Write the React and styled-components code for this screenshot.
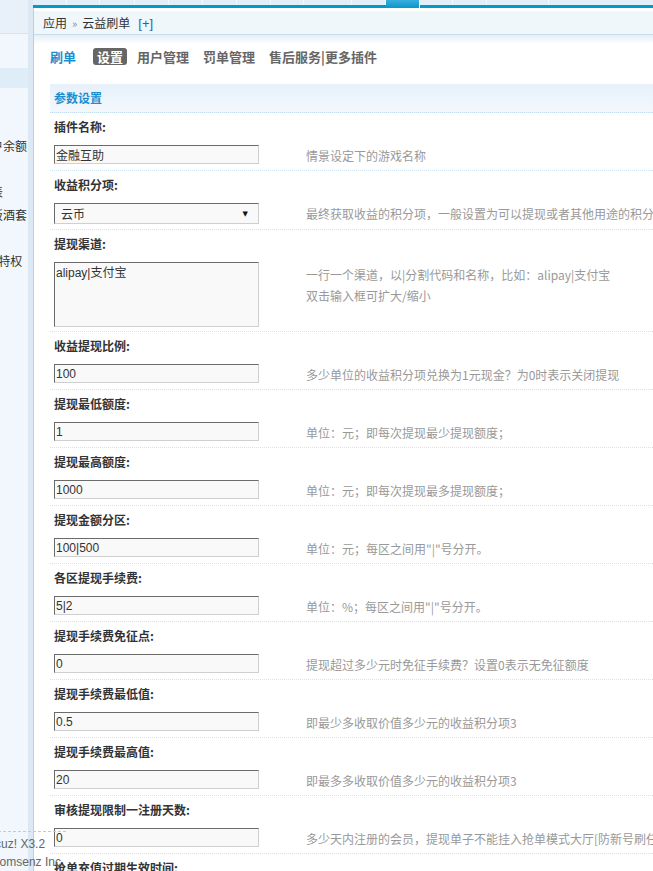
import styled, { createGlobalStyle } from 'styled-components';

const GlobalStyle = createGlobalStyle`
	html, body {
		margin: 0;
		padding: 0;
		overflow: hidden;
		background: #fff;
	}
	body {
		font: 12px "Liberation Sans", "Noto Sans CJK SC", sans-serif;
		color: #333;
	}
`

const navTabs = [34, 33, 35, 34, 34, 34, 34, 33, 48, 34, 34, 33, 34, 62, 120];
const activeTab = 10;

const menu = [
	{ text: '云益刷单插件', active: true },
	{ text: '用户列表' },
	{ text: '订单列表' },
	{ text: '云益刷单用户账户余额：' },
	{ text: '提现记录' },
	{ text: '充值卡密管理列表' },
	{ text: '会员每日限时特饭酒套' },
	{ text: '积分商城' },
	{ text: '开通VIP会员尊享特权' },
	{ text: '系统公告' },
];

const fields = [
	{ label: '插件名称:', value: '金融互助', tip: ['情景设定下的游戏名称'] },
	{ label: '收益积分项:', kind: 'select', value: '云币', tip: ['最终获取收益的积分项，一般设置为可以提现或者其他用途的积分项'] },
	{ label: '提现渠道:', kind: 'textarea', value: 'alipay|支付宝', tip: ['一行一个渠道，以|分割代码和名称，比如：alipay|支付宝', '双击输入框可扩大/缩小'] },
	{ label: '收益提现比例:', value: '100', tip: ['多少单位的收益积分项兑换为1元现金？为0时表示关闭提现'] },
	{ label: '提现最低额度:', value: '1', tip: ['单位：元；即每次提现最少提现额度；'] },
	{ label: '提现最高额度:', value: '1000', tip: ['单位：元；即每次提现最多提现额度；'] },
	{ label: '提现金额分区:', value: '100|500', tip: ['单位：元；每区之间用"|"号分开。'] },
	{ label: '各区提现手续费:', value: '5|2', tip: ['单位：%；每区之间用"|"号分开。'] },
	{ label: '提现手续费免征点:', value: '0', tip: ['提现超过多少元时免征手续费？设置0表示无免征额度'] },
	{ label: '提现手续费最低值:', value: '0.5', tip: ['即最少多收取价值多少元的收益积分项3'] },
	{ label: '提现手续费最高值:', value: '20', tip: ['即最多多收取价值多少元的收益积分项3'] },
	{ label: '审核提现限制一注册天数:', value: '0', tip: ['多少天内注册的会员，提现单子不能挂入抢单模式大厅[防新号刷任务]'] },
	{ label: '抢单充值过期生效时间:', value: '24', tip: ['单位：小时'] },
];

const Shell = styled.div`
	position: relative;
	display: flex;
	height: 100vh;
	overflow: hidden;
`
const Sidebar = styled.aside`
	flex: 0 0 28px;
	background: #f1f7fc;
	border-right: 5px solid #dce9f5;
	overflow: hidden;
`
const SideHead = styled.div`
	height: 33px;
	background: #e8f1fa;
	border-bottom: 1px solid #d5e4f1;
`
const MenuScroll = styled.ul`
	list-style: none;
	margin: 0 0 0 -93px;
	padding: 34px 0 0;
	width: 121px;
`
const MenuItem = styled.li`
	height: 20px;
	line-height: 20px;
	margin-bottom: 3px;
	white-space: nowrap;
	font-family: "Liberation Sans", "Noto Sans CJK SC", sans-serif;
	color: #333;
	background: ${p => p.$active ? '#dfedf9' : 'transparent'};
`
const MainCol = styled.div`
	flex: 1;
	display: flex;
	flex-direction: column;
	min-width: 0;
`
const TopNav = styled.nav`
	display: flex;
	height: 5px;
	background: #e2eef8;
	border-bottom: 3px solid #0099cc;
`
const NavTab = styled.span`
	flex: 0 0 ${p => p.$w}px;
	box-sizing: border-box;
	border-right: 1px solid #f4f9fd;
	background: ${p => p.$active ? 'linear-gradient(#3aaede, #0a96cb)' : 'transparent'};
	height: ${p => p.$active ? '8px' : '5px'};
`
const Frame = styled.main`
	flex: 1;
	border-left: 1px solid #bccfe1;
	padding-top: 3px;
`
const Crumbs = styled.div`
	height: 23px;
	line-height: 23px;
	padding-left: 9px;
	background: #eff7fb;
	border-bottom: 1px solid #c8dbea;
	font-family: "Noto Sans CJK SC", sans-serif;
	color: #333;
	white-space: nowrap;
	span {
		margin: 0 5px;
		color: #7a8ea8;
		font-size: 11px;
	}
	a {
		margin-left: 8px;
		color: #2b62b0;
		text-decoration: none;
		font-family: "Liberation Sans", sans-serif;
		font-size: 13px;
	}
`
const Content = styled.div`
	padding: 13px 0 0 16px;
	background: linear-gradient(to bottom, #e4eef7, #ffffff 9px) no-repeat;
`
const Tabs = styled.div`
	display: flex;
	align-items: center;
	height: 17px;
	margin-bottom: 19px;
	font: bold 13px "Noto Sans CJK SC", sans-serif;
	white-space: nowrap;
`
const TabTitle = styled.h3`
	margin: 0 17px 0 0;
	font-size: 13px;
	color: #1a8fd0;
`
const Tab = styled.span`
	line-height: 17px;
	padding: 0 4px;
	margin-right: 6px;
	border-radius: 3px;
	color: ${p => p.$current ? '#fff' : '#666'};
	background: ${p => p.$current ? '#666' : 'transparent'};
`
const SectionHead = styled.h4`
	margin: 0;
	height: 28px;
	padding-left: 4px;
	background: linear-gradient(#e7f1fa, #f3f8fd);
	border-bottom: 1px dotted #c3dcee;
	font: bold 12px/28px "Noto Sans CJK SC", sans-serif;
	color: #1a8fd0;
`
const Row = styled.section`
	padding-left: 4px;
	border-bottom: 1px dotted #cfe3f1;
`
const Label = styled.div`
	height: 29px;
	box-sizing: border-box;
	padding-top: 5px;
	font: bold 12px/18px "Noto Sans CJK SC", sans-serif;
	color: #333;
	white-space: nowrap;
`
const pad = { input: 6, select: 5, textarea: 4 };
const FieldRow = styled.div`
	display: grid;
	grid-template-columns: 252px 1fr;
	align-items: start;
	padding: 3px 0 ${p => pad[p.$kind]}px;
`
const fieldBox = `
	box-sizing: border-box;
	width: 205px;
	margin: 0;
	border: 1px solid;
	border-color: #6b6b6b #cfcfcf #cfcfcf #6b6b6b;
	background: #f9f9f9;
	color: #333;
	font: 12px "Liberation Sans", "Noto Sans CJK SC", sans-serif;
	outline: none;
`
const TextInput = styled.input`
	${fieldBox}
	height: 19px;
	padding: 0 1px;
`
const SelectBox = styled.div`
	${fieldBox}
	height: 21px;
	display: flex;
	align-items: center;
	justify-content: space-between;
	padding: 0 10px 0 6px;
	b {
		font: 7px "DejaVu Sans", sans-serif;
		color: #111;
	}
`
const TextArea = styled.textarea`
	${fieldBox}
	display: block;
	height: 65px;
	padding: 2px 1px;
	line-height: 16px;
	resize: none;
`
const Tip = styled.div`
	padding-top: 2px;
	line-height: ${p => p.$multi ? 21 : 17}px;
	font-family: "Noto Sans CJK SC", sans-serif;
	color: #999;
	white-space: nowrap;
`
const Footer = styled.footer`
	position: absolute;
	z-index: 2;
	left: -82px;
	top: 831px;
	width: 148px;
	padding-top: 3px;
	border-top: 1px dashed #c9c9c9;
	font: 12px/18px "Liberation Sans", sans-serif;
	color: #666;
	white-space: nowrap;
`
const FootLine = styled.div`
	margin-left: ${p => p.$shift || 0}px;
`

function Field({ f }) {
	const kind = f.kind || 'input';
	return (
		<Row>
			<Label>{f.label}</Label>
			<FieldRow $kind={kind}>
				<div>
					{kind === 'input' && <TextInput defaultValue={f.value} readOnly />}
					{kind === 'select' && <SelectBox><span>{f.value}</span><b>▼</b></SelectBox>}
					{kind === 'textarea' && <TextArea defaultValue={f.value} readOnly />}
				</div>
				<Tip $multi={f.tip.length > 1}>
					{f.tip.map((t, i) => <div key={i}>{t}</div>)}
				</Tip>
			</FieldRow>
		</Row>
	);
}

export default function App() {
	return (
		<>
			<GlobalStyle />
			<Shell>
				<Sidebar>
					<SideHead />
					<MenuScroll>
						{menu.map((m, i) => <MenuItem key={i} $active={m.active}>{m.text}</MenuItem>)}
					</MenuScroll>
				</Sidebar>
				<MainCol>
					<TopNav>
						{navTabs.map((w, i) => <NavTab key={i} $w={w} $active={i === activeTab} />)}
					</TopNav>
					<Frame>
						<Crumbs>应用<span>»</span>云益刷单<a href="#">[+]</a></Crumbs>
						<Content>
							<Tabs>
								<TabTitle>刷单</TabTitle>
								<Tab $current>设置</Tab>
								<Tab>用户管理</Tab>
								<Tab>罚单管理</Tab>
								<Tab>售后服务|更多插件</Tab>
							</Tabs>
							<SectionHead>参数设置</SectionHead>
							{fields.map((f, i) => <Field key={i} f={f} />)}
						</Content>
					</Frame>
				</MainCol>
				<Footer>
					<FootLine $shift={-7}>Powered by Discuz! X3.2</FootLine>
					<FootLine>© 2001-2013 Comsenz Inc.</FootLine>
				</Footer>
			</Shell>
		</>
	);
}
